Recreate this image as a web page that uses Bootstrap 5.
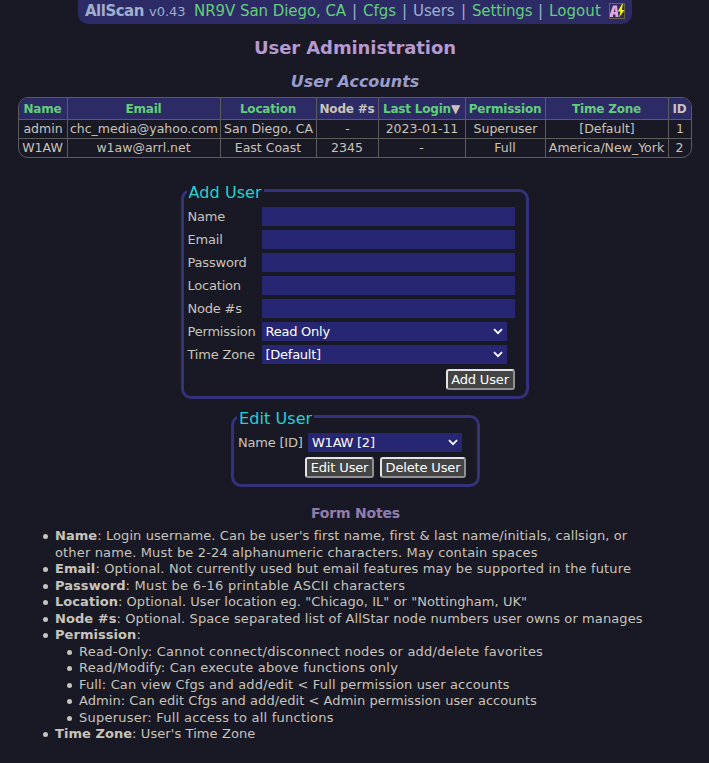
<!DOCTYPE html>
<html lang="en">
<head>
<meta charset="utf-8">
<meta name="viewport" content="width=device-width, initial-scale=1">
<title>AllScan - User Administration</title>
<link href="https://cdn.jsdelivr.net/npm/bootstrap@5.3.0/dist/css/bootstrap.min.css" rel="stylesheet">
<style>
body{background:#191825;color:#c8c4ba;font-family:Verdana,"DejaVu Sans",sans-serif;font-size:13px;line-height:16.5px;height:763px;overflow:hidden}
a{color:#62cf78;text-decoration:none}
.topbar{width:554px;height:24px;background:#2c2b66;border-radius:0 0 10px 10px;color:#9fb0cf;font-size:15px;line-height:22px;padding-left:7.5px;white-space:pre}
.topbar .brand{font-weight:700;width:64px;letter-spacing:-.5px}
.topbar .ver{font-size:13px;width:45px;line-height:24px}
.topbar .site{width:158px;letter-spacing:-.06px}
.topbar .sep{width:11px}
.topbar .cf{width:39px}
.topbar .us{width:48px;letter-spacing:-.1px}
.topbar .se{width:66px;letter-spacing:-.15px}
.topbar .lo{width:59.5px;letter-spacing:.1px}
.topbar svg{margin-top:3px}
h1{font-size:18px;font-weight:700;line-height:22px;color:#b599cf;margin:13px 0 0;padding-left:1px;letter-spacing:-.1px}
h2{font-size:16px;font-weight:700;font-style:italic;line-height:20px;color:#9a9dcc;margin:13px 0 0;padding-left:1px}
.frame{width:674px;margin-top:5px;border:1px solid #5c5c5c;border-radius:10px;overflow:hidden}
.users{table-layout:fixed;width:672px;border-collapse:separate;border-spacing:0;font-size:12.5px;line-height:16px;text-align:center}
.users th,.users td{padding:0;white-space:nowrap;border-right:1px solid #5c5c5c;border-bottom:1px solid #5c5c5c}
.users th{background:#2c2b66;height:22px;font-size:12px;letter-spacing:-.2px;text-align:center;padding:1px 0 0}
.users td{height:19px;padding:0 0 0 1px}
.users tr:last-child td{border-bottom:0;height:18px;padding:0 0 1px}
.users th:last-child,.users td:last-child{border-right:0}
.panel{border:3px solid #33327a;border-radius:10px;margin:0 auto;padding:0 11px 0 4px;min-width:0}
.panel legend{float:none;width:auto;font-size:16px;line-height:24px;height:18px;color:#22d3d3;padding:0 2px;margin:0 0 8px -1px;letter-spacing:.08px}
.add{width:348px;height:218px;margin-top:23px}
.edit{width:249px;height:80px;margin-top:8px;position:relative;left:1px}
.line{height:19px;margin-bottom:4px}
.line label{width:74px;letter-spacing:-.2px;line-height:19px;white-space:nowrap}
.edit .line label{width:70px}
.field{height:19px;border:0;border-radius:0;background:#272672;color:#fff;padding:0;width:253px}
.pick{height:19px;width:245px;background:#272672;color:#fff;padding:0 4px;line-height:19px;letter-spacing:-.25px}
.edit .pick{width:154px}
.actions{padding-top:1px;gap:6px}
.act{height:21px;border:2px outset #e4e4e4;border-radius:3px;background:#444;color:#fff;font-size:13px;line-height:17px;padding:0;text-align:center;letter-spacing:-.15px;white-space:nowrap}
.wa{width:69px}.wd{width:86px}
h3{font-size:14px;font-weight:700;color:#937cad;line-height:18px;margin:17px 0 0;padding-left:2px;letter-spacing:-.2px}
.notes{margin:6px 0 0 55px;padding:0;width:600px;letter-spacing:.11px;list-style:none}
.notes ul{padding-left:24px;list-style:none;letter-spacing:.24px}
.notes b{letter-spacing:.05px}
.notes li::before{content:"";float:left;width:5px;height:5px;border-radius:50%;background:#c8c4ba;margin:6px 0 0 -12px}
.notes .k0{letter-spacing:.05px}.notes .k1{letter-spacing:.09px}.notes .k2{letter-spacing:.15px}.notes .k3{letter-spacing:.3px}
</style>
<script src="https://cdn.jsdelivr.net/npm/bootstrap@5.3.0/dist/js/bootstrap.bundle.min.js"></script>
</head>
<body>
<header class="topbar d-flex mx-auto"><span class="brand">AllScan</span><span class="ver">v0.43</span><a class="site" href="#">NR9V San Diego, CA</a><span class="sep">|</span><a class="cf" href="#">Cfgs</a><span class="sep">|</span><span class="us">Users</span><span class="sep">|</span><a class="se" href="#">Settings</a><span class="sep">|</span><a class="lo" href="#">Logout</a><svg width="16" height="16" viewBox="0 0 16 16"><rect x=".5" y=".5" width="15" height="15" fill="#302c58" stroke="#6b6546"/><path d="M1 14V11L4 2.500H8L9.500 14H6.500V11.500H4V14ZM4.800 9H6.400L6 5Z" fill="#dda6df" fill-rule="evenodd"/><path d="M13 1L8.800 8.500H11.500L10 14.500L15.500 7H12.800L14 1Z" fill="#f5f512"/></svg></header>
<main>
<h1 class="text-center">User Administration</h1>
<h2 class="text-center">User Accounts</h2>
<div class="frame ms-auto me-auto">
<table class="users">
<colgroup><col style="width:49px"><col style="width:153px"><col style="width:96px"><col style="width:62px"><col style="width:87px"><col style="width:80px"><col style="width:123px"><col style="width:22px"></colgroup>
<tr><th><a href="#">Name</a></th><th><a href="#">Email</a></th><th><a href="#">Location</a></th><th>Node #s</th><th><a href="#">Last Login</a>▼</th><th><a href="#">Permission</a></th><th><a href="#">Time Zone</a></th><th>ID</th></tr>
<tr><td>admin</td><td>chc_media@yahoo.com</td><td>San Diego, CA</td><td>-</td><td>2023-01-11</td><td>Superuser</td><td>[Default]</td><td>1</td></tr>
<tr><td>W1AW</td><td>w1aw@arrl.net</td><td>East Coast</td><td>2345</td><td>-</td><td>Full</td><td>America/New_York</td><td>2</td></tr>
</table>
</div>
<fieldset class="panel add">
<legend>Add User</legend>
<div class="line d-flex"><label for="n">Name</label><input class="field" id="n"></div>
<div class="line d-flex"><label for="e">Email</label><input class="field" id="e"></div>
<div class="line d-flex"><label for="p">Password</label><input class="field" id="p" type="password"></div>
<div class="line d-flex"><label for="l">Location</label><input class="field" id="l"></div>
<div class="line d-flex"><label for="k">Node #s</label><input class="field" id="k"></div>
<div class="line d-flex"><label>Permission</label><div class="pick d-flex justify-content-between align-items-center" role="combobox">Read Only<svg width="10" height="7" viewBox="0 0 10 7"><path d="M1 1.200L5 5.200L9 1.200" fill="none" stroke="#fff" stroke-width="1.700"/></svg></div></div>
<div class="line d-flex"><label>Time Zone</label><div class="pick d-flex justify-content-between align-items-center" role="combobox">[Default]<svg width="10" height="7" viewBox="0 0 10 7"><path d="M1 1.200L5 5.200L9 1.200" fill="none" stroke="#fff" stroke-width="1.700"/></svg></div></div>
<div class="actions d-flex justify-content-end"><button class="act wa" type="button">Add User</button></div>
</fieldset>
<fieldset class="panel edit">
<legend>Edit User</legend>
<div class="line d-flex"><label>Name [ID]</label><div class="pick d-flex justify-content-between align-items-center" role="combobox">W1AW [2]<svg width="10" height="7" viewBox="0 0 10 7"><path d="M1 1.200L5 5.200L9 1.200" fill="none" stroke="#fff" stroke-width="1.700"/></svg></div></div>
<div class="actions d-flex justify-content-end"><button class="act wa" type="button">Edit User</button><button class="act wd" type="button">Delete User</button></div>
</fieldset>
<h3 class="text-center">Form Notes</h3>
<ul class="notes">
<li><span class="k1"><b>Name</b>: Login username. Can be user's first name, first &amp; last name/initials, callsign, or</span><br><span class="k2">other name. Must be 2-24 alphanumeric characters. May contain spaces</span></li>
<li class="k2"><b>Email</b>: Optional. Not currently used but email features may be supported in the future</li>
<li class="k3"><b>Password</b>: Must be 6-16 printable ASCII characters</li>
<li class="k0"><b>Location</b>: Optional. User location eg. "Chicago, IL" or "Nottingham, UK"</li>
<li><b>Node #s</b>: Optional. Space separated list of AllStar node numbers user owns or manages</li>
<li><b>Permission</b>:
<ul>
<li>Read-Only: Cannot connect/disconnect nodes or add/delete favorites</li>
<li>Read/Modify: Can execute above functions only</li>
<li class="k2">Full: Can view Cfgs and add/edit &lt; Full permission user accounts</li>
<li class="k0">Admin: Can edit Cfgs and add/edit &lt; Admin permission user accounts</li>
<li>Superuser: Full access to all functions</li>
</ul></li>
<li class="k1"><b>Time Zone</b>: User's Time Zone</li>
</ul>
</main>
</body>
</html>
